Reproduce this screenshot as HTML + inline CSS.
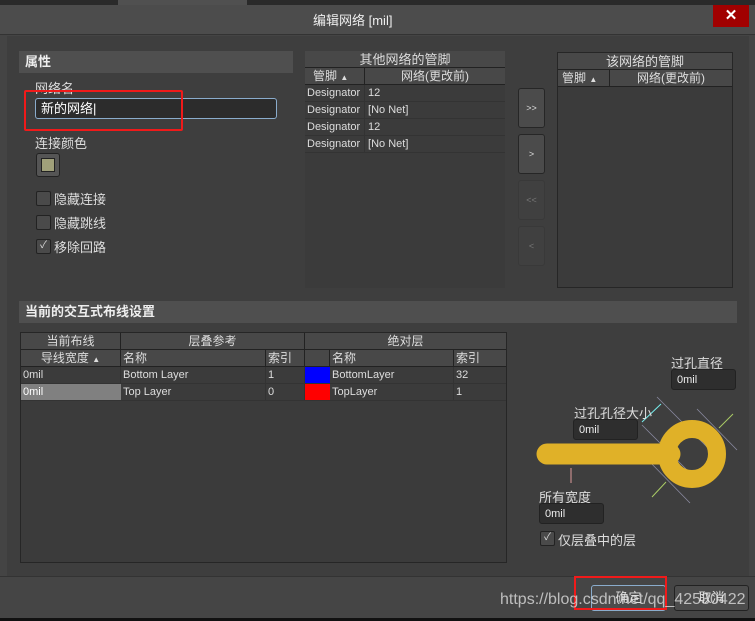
<!DOCTYPE html><html><head><meta charset="utf-8"><style>
*{box-sizing:border-box;margin:0;padding:0}
body{width:755px;height:621px;background:#444;font-family:"Liberation Sans","Noto Sans CJK SC",sans-serif;color:#ddd;font-size:12px;position:relative;overflow:hidden}
.a{position:absolute}
.hd{background:#4f4f4f;font-weight:bold;font-size:13px;padding-left:6px;line-height:22px;color:#eee}
.cb{width:15px;height:15px;border:1px solid #222;background:#4a4a4a;border-radius:2px}
.row{height:17px;line-height:17px;border-bottom:1px solid #333;font-size:11px;white-space:nowrap}
.th{background:#484848;border-bottom:1px solid #222;height:17px;line-height:17px;font-size:12px}
.btn{border:1px solid #262626;border-radius:3px;background:#4b4b4b;text-align:center;font-size:9px;color:#ddd}
.in{background:#2e2e2e;border:1px solid #222;border-radius:3px;font-size:11px;padding-left:5px;line-height:20px;color:#eee}
</style></head><body>
<div class="a" style="left:0;top:0;width:755px;height:5px;background:#2a2a2a"></div>
<div class="a" style="top:0;left:118px;width:129px;height:5px;background:#505050"></div>
<div class="a" style="left:0;top:5px;width:755px;height:30px;background:#4c4c4c;border-bottom:1px solid #333"></div>
<div class="a" style="left:313px;top:10px;font-size:13px;color:#eee">编辑网络 [mil]</div>
<div class="a" style="left:713px;top:5px;width:36px;height:22px;background:#a10000;color:#fff;text-align:center;font-size:15px;line-height:22px;font-weight:bold">✕</div>
<div class="a" style="left:7px;top:36px;width:742px;height:540px;background:#3e3e3e"></div>
<div class="a hd" style="left:19px;top:51px;width:274px">属性</div>
<div class="a" style="left:35px;top:78px;font-size:13px">网络名</div>
<div class="a" style="left:35px;top:98px;width:242px;height:21px;background:#2c2c2c;border:1px solid #8aaccc;border-radius:3px;font-size:13px;line-height:19px;padding-left:5px;color:#fff">新的网络|</div>
<div class="a" style="left:24px;top:90px;width:159px;height:41px;border:2px solid #f01a1a;border-radius:2px"></div>
<div class="a" style="left:35px;top:133px;font-size:13px">连接颜色</div>
<div class="a" style="left:36px;top:153px;width:24px;height:24px;border:1px solid #222;border-radius:3px;background:#555;padding:4px"><div style="width:14px;height:14px;background:#a0a07a;border:1px solid #222"></div></div>
<div class="a cb" style="left:36px;top:191px"></div><div class="a" style="left:54px;top:189px;font-size:13px">隐藏连接</div>
<div class="a cb" style="left:36px;top:215px"></div><div class="a" style="left:54px;top:213px;font-size:13px">隐藏跳线</div>
<div class="a cb" style="left:36px;top:239px;font-size:10px;line-height:12px;text-align:center">✓</div><div class="a" style="left:54px;top:237px;font-size:13px">移除回路</div>
<div class="a" style="left:305px;top:51px;width:200px;height:237px;background:#3b3b3b">
<div class="th" style="text-align:center;font-size:13px">其他网络的管脚</div>
<div class="th" style="display:flex"><div style="width:60px;padding-left:8px;border-right:1px solid #222">管脚 <span style="font-size:8px">▲</span></div><div style="flex:1;text-align:center">网络(更改前)</div></div>
<div class="row"><span style="display:inline-block;width:60px;padding-left:2px;border-right:1px solid #333">Designator</span> 12</div>
<div class="row"><span style="display:inline-block;width:60px;padding-left:2px;border-right:1px solid #333">Designator</span> [No Net]</div>
<div class="row"><span style="display:inline-block;width:60px;padding-left:2px;border-right:1px solid #333">Designator</span> 12</div>
<div class="row"><span style="display:inline-block;width:60px;padding-left:2px;border-right:1px solid #333">Designator</span> [No Net]</div>
</div>
<div class="a btn" style="left:518px;top:88px;width:27px;height:40px;line-height:38px">&gt;&gt;</div>
<div class="a btn" style="left:518px;top:134px;width:27px;height:40px;line-height:38px">&gt;</div>
<div class="a btn" style="left:518px;top:180px;width:27px;height:40px;line-height:38px;background:#404040;border-color:#393939;color:#777">&lt;&lt;</div>
<div class="a btn" style="left:518px;top:226px;width:27px;height:40px;line-height:38px;background:#404040;border-color:#393939;color:#777">&lt;</div>
<div class="a" style="left:557px;top:52px;width:176px;height:236px;background:#3b3b3b;border:1px solid #262626">
<div class="th" style="text-align:center;font-size:13px">该网络的管脚</div>
<div class="th" style="display:flex"><div style="width:52px;padding-left:4px;border-right:1px solid #222">管脚 <span style="font-size:8px">▲</span></div><div style="flex:1;text-align:center">网络(更改前)</div></div>
</div>
<div class="a hd" style="left:19px;top:301px;width:718px">当前的交互式布线设置</div>
<div class="a" style="left:20px;top:332px;width:487px;height:231px;background:#3b3b3b;border:1px solid #262626">
<div class="th" style="display:flex;text-align:center"><div style="width:100px;border-right:1px solid #222">当前布线</div><div style="width:184px;border-right:1px solid #222">层叠参考</div><div style="flex:1">绝对层</div></div>
<div class="th" style="display:flex"><div style="width:100px;text-align:center;border-right:1px solid #222">导线宽度 <span style="font-size:8px">▲</span></div><div style="width:145px;padding-left:2px;border-right:1px solid #222">名称</div><div style="width:39px;padding-left:2px;border-right:1px solid #222">索引</div><div style="width:25px;border-right:1px solid #222"></div><div style="width:124px;padding-left:2px;border-right:1px solid #222">名称</div><div style="flex:1;padding-left:2px">索引</div></div>
<div class="row" style="display:flex"><div style="width:100px;padding-left:2px;border-right:1px solid #333">0mil</div><div style="width:145px;padding-left:2px;border-right:1px solid #333">Bottom Layer</div><div style="width:39px;padding-left:2px;border-right:1px solid #333">1</div><div style="width:25px;background:#00f"></div><div style="width:124px;padding-left:2px;border-right:1px solid #333">BottomLayer</div><div style="padding-left:2px">32</div></div>
<div class="row" style="display:flex"><div style="width:100px;padding-left:2px;background:#808080;color:#fff">0mil</div><div style="width:145px;padding-left:2px;border-right:1px solid #333">Top Layer</div><div style="width:39px;padding-left:2px;border-right:1px solid #333">0</div><div style="width:25px;background:#f00"></div><div style="width:124px;padding-left:2px;border-right:1px solid #333">TopLayer</div><div style="padding-left:2px">1</div></div>
</div>
<svg class="a" style="left:500px;top:340px" width="255" height="240">
<g stroke="#8a8aa0" stroke-width="0.8"><line x1="157" y1="57" x2="220" y2="120"/><line x1="142" y1="85" x2="190" y2="133"/><line x1="197" y1="69" x2="237" y2="110"/><line x1="147" y1="119" x2="190" y2="163"/></g>
<line x1="47" y1="114" x2="170" y2="114" stroke="#e0b128" stroke-width="21" stroke-linecap="round"/>
<circle cx="192" cy="114" r="25" fill="none" stroke="#e0b128" stroke-width="18"/>
<line x1="142" y1="82" x2="161" y2="64" stroke="#7ee" stroke-width="1"/>
<line x1="219" y1="88" x2="233" y2="74" stroke="#aacc66" stroke-width="1"/>
<line x1="152" y1="157" x2="166" y2="142" stroke="#aacc66" stroke-width="1"/>
<line x1="71" y1="128" x2="71" y2="143" stroke="#d99" stroke-width="1"/>
</svg>
<div class="a" style="left:671px;top:353px;font-size:13px">过孔直径</div>
<div class="a in" style="left:671px;top:369px;width:65px;height:21px">0mil</div>
<div class="a" style="left:574px;top:403px;font-size:13px">过孔孔径大小</div>
<div class="a in" style="left:573px;top:419px;width:65px;height:21px">0mil</div>
<div class="a" style="left:539px;top:487px;font-size:13px">所有宽度</div>
<div class="a in" style="left:539px;top:503px;width:65px;height:21px">0mil</div>
<div class="a cb" style="left:540px;top:531px;font-size:10px;line-height:12px;text-align:center">✓</div><div class="a" style="left:558px;top:530px;font-size:13px">仅层叠中的层</div>
<div class="a" style="left:0;top:576px;width:755px;height:42px;background:#454545;border-top:1px solid #333"></div>
<div class="a" style="left:591px;top:585px;width:75px;height:26px;border:1px solid #8aaccc;border-radius:3px;background:#4c4c4c;text-align:center;line-height:24px;font-size:13px">确定</div>
<div class="a" style="left:674px;top:585px;width:75px;height:26px;border:1px solid #222;border-radius:3px;background:#4c4c4c;text-align:center;line-height:24px;font-size:13px">取消</div>
<div class="a" style="left:574px;top:576px;width:93px;height:34px;border:2px solid #f01a1a"></div>
<div class="a" style="left:500px;top:591px;font-size:16px;color:rgba(230,230,230,.75)">https://blog.csdn.net/qq_42530422</div>
<div class="a" style="left:0;top:618px;width:755px;height:3px;background:#111"></div>
</body></html>
